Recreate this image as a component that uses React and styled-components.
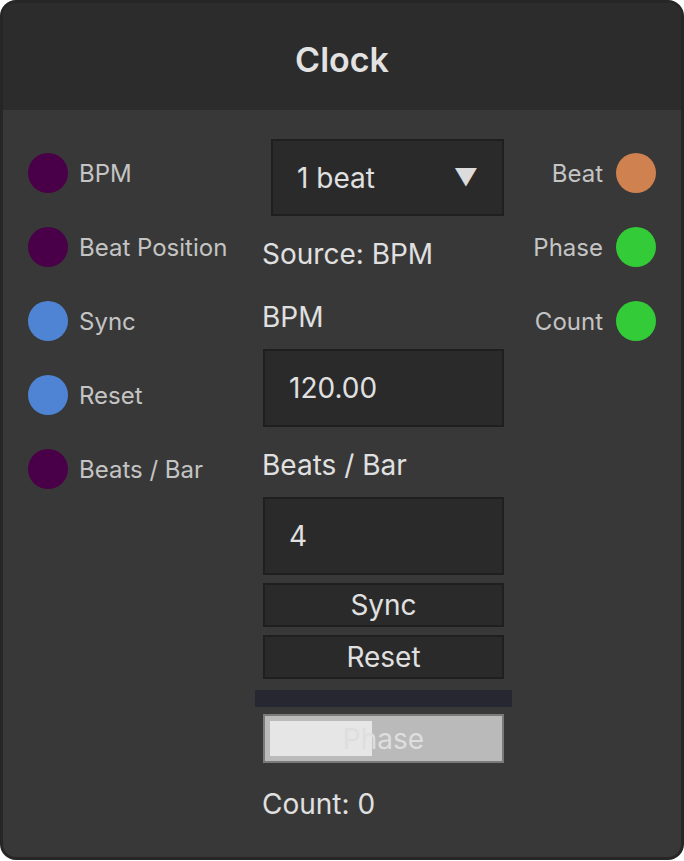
import React from 'react';
import styled, { createGlobalStyle } from 'styled-components';

const GlobalStyle = createGlobalStyle`
    html, body {
        margin: 0;
        padding: 0;
        background: #ffffff;
    }
    body {
        font-family: Inter, "Noto Sans", sans-serif;
    }
`;

const inputs = [
    { label: 'BPM', color: '#4a0048' },
    { label: 'Beat Position', color: '#4a0048' },
    { label: 'Sync', color: '#4f84d4' },
    { label: 'Reset', color: '#4f84d4' },
    { label: 'Beats / Bar', color: '#4a0048' },
];

const outputs = [
    { label: 'Beat', color: '#cf824f' },
    { label: 'Phase', color: '#33cc38' },
    { label: 'Count', color: '#33cc38' },
];

export default function App () {
    const phase = 0.45;

    return (
        <>
            <GlobalStyle />
            <Node>
                <Header>Clock</Header>
                <Body>
                    <Ports>
                        {inputs.map(p => (
                            <Port key={p.label}>
                                <Socket color={p.color} />
                                <PortLabel>{p.label}</PortLabel>
                            </Port>
                        ))}
                    </Ports>

                    <Controls>
                        <Select>
                            <span>1 beat</span>
                            <Arrow>▼</Arrow>
                        </Select>
                        <Label top={22}>Source: BPM</Label>
                        <Label top={31}>BPM</Label>
                        <Field top={16}>120.00</Field>
                        <Label top={22}>Beats / Bar</Label>
                        <Field top={16}>4</Field>
                        <Button>Sync</Button>
                        <Button>Reset</Button>
                        <Track />
                        <Progress>
                            <Fill style={{ width: `${phase * 100}%` }} />
                            <ProgressText>Phase</ProgressText>
                        </Progress>
                        <Label top={25}>Count: 0</Label>
                    </Controls>

                    <Ports right>
                        {outputs.map(p => (
                            <Port key={p.label} right>
                                <PortLabel>{p.label}</PortLabel>
                                <Socket color={p.color} />
                            </Port>
                        ))}
                    </Ports>
                </Body>
            </Node>
        </>
    );
}

const Node = styled.div`
    width: 684px;
    height: 860px;
    box-sizing: border-box;
    border: 3px solid #262626;
    border-radius: 16px;
    overflow: hidden;
    background: #383838;
    display: flex;
    flex-direction: column;
`;

const Header = styled.div`
    height: 107px;
    flex: none;
    background: #2c2c2c;
    color: #e2e2e2;
    font-size: 34px;
    font-weight: 600;
    display: flex;
    align-items: center;
    justify-content: center;
    padding-top: 6px;
    box-sizing: border-box;
`;

const Body = styled.div`
    flex: 1;
    display: grid;
    grid-template-columns: 223px 257px 1fr;
    padding: 29px 25px 0 25px;
    column-gap: 4px;
`;

const Ports = styled.div`
    display: flex;
    flex-direction: column;
    align-items: ${p => p.right ? 'flex-end' : 'flex-start'};
    gap: 34px;
    padding-top: 14px;
`;

const Port = styled.div`
    display: flex;
    align-items: center;
    gap: ${p => p.right ? '13px' : '11px'};
    height: 40px;
`;

const Socket = styled.div`
    width: 40px;
    height: 40px;
    border-radius: 50%;
    background: ${p => p.color};
    flex: none;
`;

const PortLabel = styled.span`
    color: #c4c4c4;
    font-size: 24px;
    white-space: nowrap;
`;

const Controls = styled.div`
    display: flex;
    flex-direction: column;
    color: #e0e0e0;
    font-size: 28px;
`;

const Box = styled.div`
    box-sizing: border-box;
    background: #2a2a2a;
    border: 2px solid #1f1f1f;
    color: #e0e0e0;
`;

const Select = styled(Box)`
    margin-left: 16px;
    width: 233px;
    height: 77px;
    display: flex;
    align-items: center;
    justify-content: space-between;
    padding: 0 24px;
    font-size: 28px;
`;

const Arrow = styled.span`
    font-size: 24px;
    color: #dcdcdc;
`;

const Label = styled.div`
    margin-top: ${p => p.top}px;
    margin-left: 7px;
    height: 32px;
    line-height: 32px;
    font-size: 28px;
    color: #e0e0e0;
`;

const Field = styled(Box)`
    margin-top: ${p => p.top}px;
    margin-left: 8px;
    width: 241px;
    height: 78px;
    display: flex;
    align-items: center;
    padding-left: 24px;
    font-size: 28px;
`;

const Button = styled(Box)`
    margin-top: 8px;
    margin-left: 8px;
    width: 241px;
    height: 44px;
    display: flex;
    align-items: center;
    justify-content: center;
    font-size: 28px;
`;

const Track = styled.div`
    margin-top: 11px;
    height: 17px;
    background: #272731;
`;

const Progress = styled.div`
    position: relative;
    margin-top: 7px;
    margin-left: 8px;
    width: 241px;
    height: 49px;
    box-sizing: border-box;
    border: 2px solid #7a7a7a;
    background: #bababa;
    padding: 5px;
    display: flex;
`;

const Fill = styled.div`
    background: #e6e6e6;
    height: 100%;
`;

const ProgressText = styled.span`
    position: absolute;
    inset: 0;
    display: flex;
    align-items: center;
    justify-content: center;
    font-size: 28px;
    color: #dedede;
`;
